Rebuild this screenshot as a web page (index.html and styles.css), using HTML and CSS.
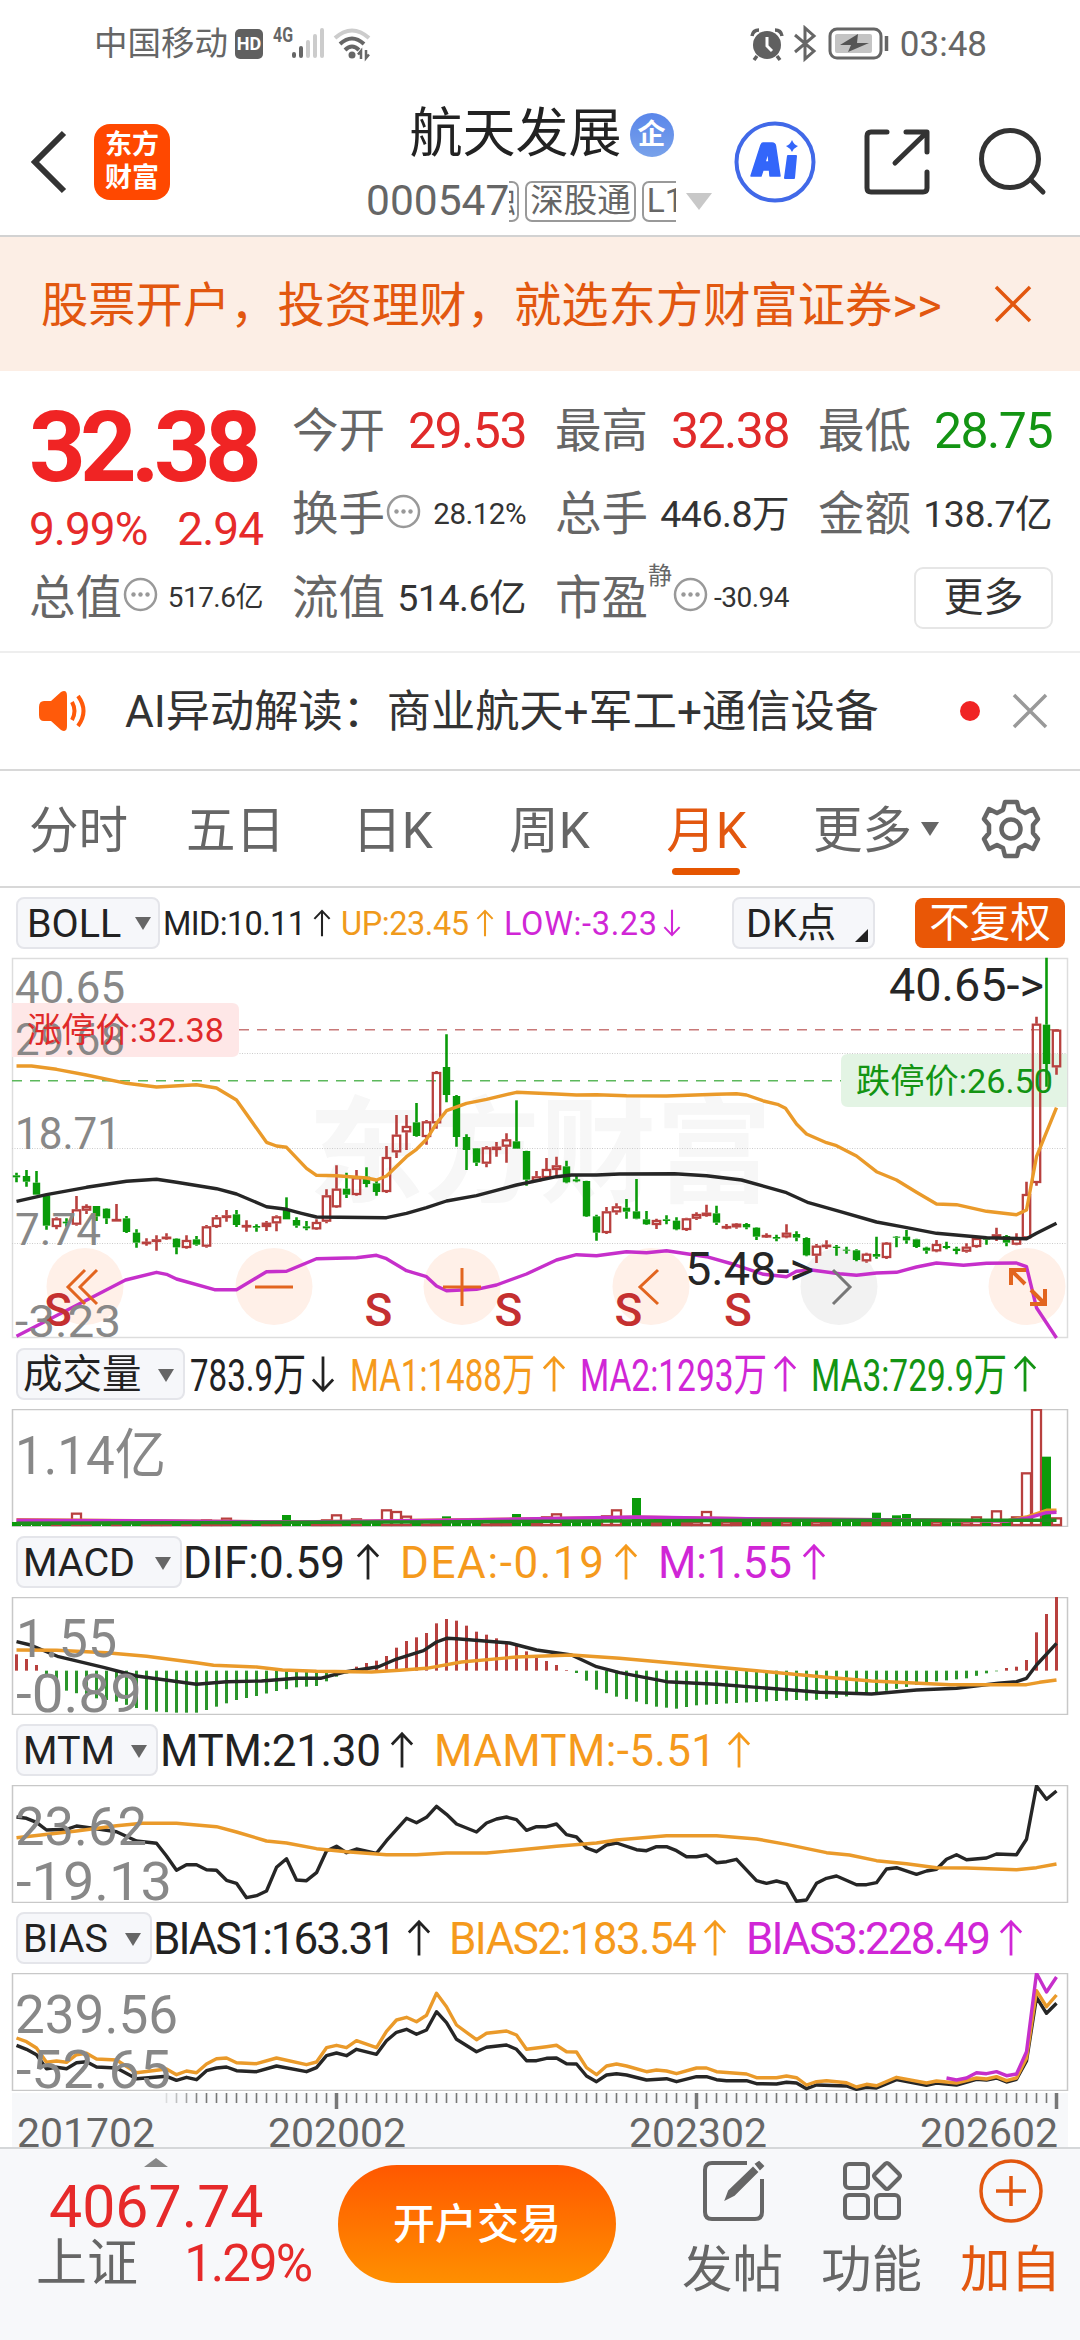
FILE: index.html
```html
<!DOCTYPE html>
<html lang="zh-CN">
<head>
  <meta charset="UTF-8">
  <meta name="viewport" content="width=device-width, initial-scale=1.0">
  <title>航天发展 000547</title>
  <link rel="stylesheet" href="styles.css">
</head>
<body>

  <!-- Shared symbols -->
  <svg class="defs" width="0" height="0">
    <symbol id="up" viewBox="0 0 26 40"><path d="M13 39V3M2 14L13 2.5L24 14" fill="none" stroke="currentColor" stroke-width="3"/></symbol>
    <symbol id="down" viewBox="0 0 26 40"><path d="M13 1V37M2 26L13 37.5L24 26" fill="none" stroke="currentColor" stroke-width="3"/></symbol>
    <symbol id="dots" viewBox="0 0 35 35"><circle cx="17.500" cy="17.500" r="15.500" fill="none" stroke="#999" stroke-width="2.500"/><circle cx="10.500" cy="17.500" r="2.200" fill="#999"/><circle cx="17.500" cy="17.500" r="2.200" fill="#999"/><circle cx="24.500" cy="17.500" r="2.200" fill="#999"/></symbol>
  </svg>

  <div class="status">
    <span class="carrier">中国移动</span>
    <span class="hd">HD</span>
    <svg class="signal" width="102" height="44" viewBox="272 21 102 44">
      <text x="273" y="41" font-size="20" font-weight="700" textLength="20" lengthAdjust="spacingAndGlyphs" fill="#666">4G</text>
      <g stroke-width="4" stroke-linecap="round">
        <path d="M294 53V55M301 47V55" stroke="#666"/>
        <path d="M308 41V55M315 35V55M322 29V55" stroke="#ccc"/>
      </g>
      <g fill="none" stroke-width="4">
        <path d="M335 37Q352 22 369 37" stroke="#ccc"/>
        <path d="M340 43Q352 32 364 43M345 49Q352 42 359 49" stroke="#666"/>
      </g>
      <circle cx="352" cy="54" r="3.500" fill="#666"/>
      <path d="M361 58V50L358 53.500M366 49V57L369 53.500" stroke="#666" stroke-width="2.500" fill="none"/>
    </svg>
    <svg class="battery" width="142" height="38" viewBox="746 24 142 38">
      <circle cx="765" cy="44" r="14" fill="#606060"/>
      <path d="M750 35Q751 29 757 29M780 35Q779 29 773 29M755 55L752 59M775 55L778 59" stroke="#606060" stroke-width="3.500" fill="none"/>
      <path d="M765 36V45L770 50" stroke="#fff" stroke-width="3" fill="none"/>
      <path d="M793 34L812 50L803 58V27L812 35L793 51" stroke="#666" stroke-width="3" fill="none"/>
      <rect x="828" y="28" width="51" height="29" rx="7" fill="none" stroke="#666" stroke-width="3"/>
      <rect x="833" y="33" width="37" height="19" rx="2" fill="#c4c4c4"/>
      <path d="M856 33L838 44H849L846 51L867 42H855Z" fill="#555"/>
      <path d="M884.500 35V50" stroke="#666" stroke-width="3.500"/>
    </svg>
    <span class="clock">03:48</span>
  </div>

  <header class="header">
    <div class="header-left">
      <svg width="38" height="66" viewBox="0 0 38 66"><path d="M34 4L5 33L34 62" fill="none" stroke="#333" stroke-width="6"/></svg>
      <div class="logo">东方<br>财富</div>
    </div>
    <div class="title">
      <div class="name">航天发展<span class="corp">企</span></div>
      <div class="code">000547<span class="tags"><i class="tag cut">融</i><i class="tag">深股通</i><i class="tag last">L1</i></span><i class="drop"></i></div>
    </div>
    <div class="header-right">
      <svg width="82" height="82" viewBox="734 120 82 82">
        <circle cx="775" cy="161" r="38.500" fill="none" stroke="#4169e8" stroke-width="4"/>
        <path d="M763 142H772Q775 142 775.500 145L780 175H770L769.500 169H763L761 175H751L761 144Q762 142 763 142ZM768 151L765 161H769Z" fill="#3366fa" fill-rule="evenodd" stroke="#3366fa" stroke-width="1.500" stroke-linejoin="round"/>
        <path d="M788 155H796L794 177H785Z" fill="#3366fa" stroke="#3366fa" stroke-width="2" stroke-linejoin="round"/>
        <path d="M792 139Q794 144 798 145Q794 147 792 151Q790 147 786 145Q790 144 792 139Z" fill="#3366fa"/>
      </svg>
      <svg width="70" height="70" viewBox="861 126 70 70" fill="none" stroke="#333" stroke-width="5" stroke-linecap="round" stroke-linejoin="round">
        <path d="M886 131H870Q866 131 866 135V187Q866 191 870 191H922Q926 191 926 187V171M905 131H926V151M925 132L894 162"/>
      </svg>
      <svg width="70" height="70" viewBox="979 126 70 70" fill="none" stroke="#333" stroke-width="5" stroke-linecap="round">
        <circle cx="1011" cy="158" r="28.500"/><path d="M1032 179L1044 191"/>
      </svg>
    </div>
  </header>

  <div class="banner">
    <span>股票开户，投资理财，就选东方财富证券&gt;&gt;</span>
    <svg width="38" height="38" viewBox="0 0 38 38"><path d="M2 2L36 36M36 2L2 36" stroke="#e2570f" stroke-width="3.500"/></svg>
  </div>

  <section class="quote">
    <div class="last-price">
      <b>32.38</b>
      <p><span>9.99%</span><span>2.94</span></p>
    </div>
    <div class="cell"><label>今开</label><span class="red">29.53</span></div>
    <div class="cell"><label>最高</label><span class="red">32.38</span></div>
    <div class="cell"><label>最低</label><span class="green">28.75</span></div>

    <div class="cell"><label>换手</label><svg class="info"><use href="#dots"/></svg><span class="small">28.12%</span></div>
    <div class="cell"><label>总手</label><span class="mid">446.8万</span></div>
    <div class="cell"><label>金额</label><span class="mid">138.7亿</span></div>

    <div class="cell"><label>总值</label><svg class="info"><use href="#dots"/></svg><span class="tiny">517.6亿</span></div>
    <div class="cell"><label>流值</label><span class="mid">514.6亿</span></div>
    <div class="cell"><label>市盈</label><sup>静</sup><svg class="info"><use href="#dots"/></svg><span class="tiny">-30.94</span></div>
    <div class="cell end"><button class="more">更多</button></div>
  </section>

  <div class="notice">
    <svg width="50" height="44" viewBox="38 689 50 44">
      <path d="M39 707Q39 701 44 701H51L61 692Q67 689 67 696V726Q67 733 61 730L51 721H44Q39 721 39 715Z" fill="#ff5a0a"/>
      <path d="M72 702Q77 711 72 720M78 696Q89 711 78 726" fill="none" stroke="#ff5a0a" stroke-width="4"/>
    </svg>
    <span class="notice-text">AI异动解读：商业航天+军工+通信设备</span>
    <i class="dot"></i>
    <svg width="36" height="36" viewBox="0 0 36 36"><path d="M2 2L34 34M34 2L2 34" stroke="#999" stroke-width="3.500"/></svg>
  </div>

  <nav class="tabs">
    <a>分时</a><a>五日</a><a>日K</a><a>周K</a><a class="active">月K</a><a class="menu">更多<i></i></a>
    <svg width="60" height="62" viewBox="-30 -31 60 62" fill="none" stroke="#666" stroke-width="4.500" stroke-linejoin="round">
      <path d="M-6-27H6L8-19L14-16L22-20L27-10L22-4V4L27 10L22 20L14 16L8 19L6 27H-6L-8 19L-14 16L-22 20L-27 10L-22 4V-4L-27-10L-22-20L-14-16L-8-19Z"/>
      <circle r="9.500"/>
    </svg>
  </nav>

  <div class="indicator boll">
    <button class="pick">BOLL<i></i></button>
    <svg width="534" height="69" viewBox="160 888 534 69" font-size="32.500">
      <g color="#222" fill="#222"><text x="163" y="935" textLength="143">MID:10.11</text><use href="#up" x="313" y="909" width="18" height="28"/></g>
      <g color="#f09a1c" fill="#f09a1c"><text x="341" y="935" textLength="128">UP:23.45</text><use href="#up" x="476" y="909" width="18" height="28"/></g>
      <g color="#d026d6" fill="#d026d6"><text x="504" y="935" textLength="153">LOW:-3.23</text><use href="#down" x="663" y="909" width="18" height="28"/></g>
    </svg>
    <button class="dk">DK点<i></i></button>
    <button class="fq">不复权</button>
  </div>
  <svg class="chart" id="kline" width="1080" height="382" viewBox="0 957 1080 382"></svg>

  <div class="indicator">
    <button class="pick" style="width: 169px">成交量<i></i></button>
    <svg width="895" height="70" viewBox="185 1339 895 70" font-size="45">
      <g color="#222" fill="#222"><text x="190" y="1391" textLength="116" lengthAdjust="spacingAndGlyphs">783.9万</text><use href="#down" x="311" y="1355" width="24" height="38"/></g>
      <g color="#f59a1c" fill="#f59a1c"><text x="350" y="1391" textLength="185" lengthAdjust="spacingAndGlyphs">MA1:1488万</text><use href="#up" x="542" y="1355" width="24" height="38"/></g>
      <g color="#d026d6" fill="#d026d6"><text x="580" y="1391" textLength="187" lengthAdjust="spacingAndGlyphs">MA2:1293万</text><use href="#up" x="773" y="1355" width="24" height="38"/></g>
      <g color="#139413" fill="#139413"><text x="811" y="1391" textLength="196" lengthAdjust="spacingAndGlyphs">MA3:729.9万</text><use href="#up" x="1013" y="1355" width="24" height="38"/></g>
    </svg>
  </div>
  <svg class="chart" id="volume" width="1080" height="118" viewBox="0 1409 1080 118"></svg>

  <div class="indicator">
    <button class="pick" style="width: 166px">MACD<i></i></button>
    <svg width="898" height="70" viewBox="182 1527 898 70" font-size="44">
      <g color="#222" fill="#222"><text x="183" y="1578" textLength="162">DIF:0.59</text><use href="#up" x="356" y="1543" width="24" height="38"/></g>
      <g color="#f59a1c" fill="#f59a1c"><text x="400" y="1578" textLength="204">DEA:-0.19</text><use href="#up" x="614" y="1543" width="24" height="38"/></g>
      <g color="#d026d6" fill="#d026d6"><text x="658" y="1578" textLength="134">M:1.55</text><use href="#up" x="802" y="1543" width="24" height="38"/></g>
    </svg>
  </div>
  <svg class="chart" id="macd" width="1080" height="118" viewBox="0 1597 1080 118"></svg>

  <div class="indicator">
    <button class="pick" style="width: 142px">MTM<i></i></button>
    <svg width="922" height="70" viewBox="158 1715 922 70" font-size="44">
      <g color="#222" fill="#222"><text x="160" y="1766" textLength="221">MTM:21.30</text><use href="#up" x="390" y="1731" width="24" height="38"/></g>
      <g color="#f59a1c" fill="#f59a1c"><text x="434" y="1766" textLength="282">MAMTM:-5.51</text><use href="#up" x="727" y="1731" width="24" height="38"/></g>
    </svg>
  </div>
  <svg class="chart" id="mtm" width="1080" height="118" viewBox="0 1785 1080 118"></svg>

  <div class="indicator">
    <button class="pick" style="width: 136px">BIAS<i></i></button>
    <svg width="928" height="70" viewBox="152 1903 928 70" font-size="44">
      <g color="#222" fill="#222"><text x="153" y="1954" textLength="243">BIAS1:163.31</text><use href="#up" x="407" y="1919" width="24" height="38"/></g>
      <g color="#f59a1c" fill="#f59a1c"><text x="449" y="1954" textLength="248">BIAS2:183.54</text><use href="#up" x="703" y="1919" width="24" height="38"/></g>
      <g color="#d026d6" fill="#d026d6"><text x="746" y="1954" textLength="245">BIAS3:228.49</text><use href="#up" x="999" y="1919" width="24" height="38"/></g>
    </svg>
  </div>
  <svg class="chart" id="bias" width="1080" height="118" viewBox="0 1973 1080 118"></svg>
  <svg class="chart" id="axis" width="1080" height="56" viewBox="0 2091 1080 56"></svg>

  <footer class="bottom">
    <div class="index">
      <i></i>
      <b>4067.74</b>
      <p>上证<span>1.29%</span></p>
    </div>
    <button class="trade">开户交易</button>
    <div class="action">
      <svg width="64" height="64" viewBox="700 2159 64 64" fill="none" stroke="#666" stroke-width="4">
        <path d="M746 2163H711Q704 2163 704 2170V2212Q704 2219 711 2219H754Q761 2219 761 2212V2179"/>
        <path d="M725 2199L728 2191L752 2168L756 2172L733 2195ZM755 2164L758 2162L762 2166L759 2169Z" fill="#666" stroke-width="2"/>
      </svg>
      <span>发帖</span>
    </div>
    <div class="action">
      <svg width="64" height="64" viewBox="840 2159 64 64" fill="none" stroke="#666" stroke-width="4">
        <rect x="845" y="2164" width="23" height="24" rx="4"/><rect x="845" y="2195" width="23" height="23" rx="4"/><rect x="876" y="2195" width="23" height="23" rx="4"/>
        <path d="M885 2164Q887 2162 889 2164L899 2174Q901 2176 899 2178L889 2188Q887 2190 885 2188L875 2178Q873 2176 875 2174Z"/>
      </svg>
      <span>功能</span>
    </div>
    <div class="action orange">
      <svg width="64" height="64" viewBox="0 0 64 64" fill="none" stroke="#e2570f" stroke-width="3.500"><circle cx="32" cy="32" r="30"/><path d="M17 32H47M32 17V47"/></svg>
      <span>加自</span>
    </div>
  </footer>

  <script src="chart.js"></script>
</body>
</html>
```
FILE: styles.css
```css
* {
  margin: 0;
  padding: 0;
  box-sizing: border-box;
}

body {
  width: 1080px;
  height: 2340px;
  overflow: hidden;
  background: #fff;
  color: #333;
  font-family: Roboto, "Noto Sans CJK SC", sans-serif;
  line-height: 1;
}

i {
  font-style: normal;
}

svg {
  display: block;
  flex: none;
}

button {
  border: none;
  font-family: inherit;
  line-height: 1;
  white-space: nowrap;
}

.defs {
  position: absolute;
}

/* Status bar */
.status {
  display: flex;
  align-items: center;
  height: 88px;
  padding: 0 93px 0 94px;
  color: #666;
  font-size: 33.5px;
}

.hd {
  width: 28px;
  height: 30px;
  margin: 0 9px 0 7px;
  border-radius: 5px;
  background: #606060;
  color: #fff;
  font-size: 18px;
  font-weight: 700;
  line-height: 30px;
  text-align: center;
}

.battery {
  margin-left: auto;
}

.clock {
  margin-left: 10px;
  font-size: 35px;
}

/* Header */
.header {
  display: flex;
  height: 149px;
  border-bottom: 2px solid #d2d2d2;
}

.header-left {
  display: flex;
  align-items: center;
  gap: 26px;
  width: 366px;
  padding-left: 30px;
}

.logo {
  width: 76px;
  height: 76px;
  padding-top: 5px;
  border-radius: 16px;
  background: #ff4800;
  color: #fff;
  font-size: 27px;
  font-weight: 700;
  line-height: 33px;
  text-align: center;
}

.title {
  width: 348px;
  padding-top: 11px;
}

.name {
  display: flex;
  align-items: center;
  justify-content: center;
  gap: 8px;
  height: 68px;
  padding: 3px 0 0 3px;
  color: #222;
  font-size: 53px;
}

.corp {
  width: 44px;
  height: 44px;
  border-radius: 50%;
  background: linear-gradient(#5a86ea, #79a2ea);
  color: #fff;
  font-size: 28px;
  font-weight: 700;
  line-height: 44px;
  text-align: center;
}

.code {
  display: flex;
  align-items: center;
  height: 68px;
  color: #666;
  font-size: 42.5px;
}

.tags {
  display: flex;
  gap: 6px;
  width: 167px;
  overflow: hidden;
}

.tag {
  flex: none;
  height: 41px;
  padding: 0 3px;
  border: 2px solid #999;
  border-radius: 7px;
  font-size: 33.5px;
  line-height: 36px;
}

.tag.cut {
  width: 10px;
  padding: 0;
  border-left: none;
  border-radius: 0 7px 7px 0;
  overflow: hidden;
  text-indent: -27px;
}

.tag.last {
  padding-right: 10px;
}

.drop {
  margin-left: 10px;
  border: 13px solid transparent;
  border-top: 17px solid #c8c8c8;
  border-bottom: none;
}

.header-right {
  display: flex;
  align-items: center;
  gap: 46px;
  padding-left: 20px;
}

/* Promotion */
.banner {
  display: flex;
  align-items: center;
  justify-content: space-between;
  height: 134px;
  padding: 0 48px 0 41px;
  background: #fceee5;
  color: #e2570f;
  font-size: 47.3px;
}

.banner span {
  padding-top: 5px;
}

/* Quote grid */
.quote {
  display: grid;
  grid-template-columns: repeat(4, 234px);
  grid-template-rows: repeat(3, 83.5px);
  column-gap: 29px;
  height: 282px;
  padding: 18px 0 0 29px;
  border-bottom: 2px solid #eee;
}

.last-price {
  grid-row: span 2;
  padding-top: 9px;
  color: #f02424;
}

.last-price b {
  display: block;
  font-size: 99px;
  letter-spacing: -5.8px;
}

.last-price p {
  display: flex;
  justify-content: space-between;
  margin-top: 9px;
  font-size: 46px;
  color: #e62a2a;
  letter-spacing: -1px;
}

.cell {
  display: flex;
  align-items: center;
  justify-content: space-between;
}

.cell label {
  color: #666;
  font-size: 46.5px;
}

.cell span {
  letter-spacing: -0.5px;
}

.cell .red,
.cell .green {
  color: #e02a2a;
  font-size: 50px;
  letter-spacing: -1.5px;
}

.cell .green {
  color: #139413;
}

.cell .mid {
  padding-top: 1px;
  font-size: 37.5px;
}

.cell .small {
  margin-left: auto;
  font-size: 29.5px;
}

.cell .tiny {
  margin-left: auto;
  font-size: 28px;
}

.cell sup {
  margin-top: -44px;
  color: #666;
  font-size: 24px;
}

.info {
  width: 35px;
  height: 35px;
  margin: 0 0 6px 1px;
}

.cell.end {
  justify-content: flex-end;
}

.more {
  width: 139px;
  height: 62px;
  margin-right: -1px;
  border: 2px solid #e6e6e6;
  border-radius: 9px;
  background: #fff;
  color: #333;
  font-size: 40px;
}

/* Notice */
.notice {
  display: flex;
  align-items: center;
  height: 118px;
  padding: 0 32px 0 38px;
  border-bottom: 2px solid #d8d8d8;
}

.notice-text {
  margin-left: 37px;
  padding-top: 3px;
  font-size: 44.2px;
}

.dot {
  width: 20px;
  height: 20px;
  margin: 0 32px 0 auto;
  border-radius: 50%;
  background: #f02424;
}

/* Period tabs */
.tabs {
  display: flex;
  align-items: center;
  height: 117px;
  padding-right: 39px;
  border-bottom: 2px solid #d8d8d8;
  color: #666;
  font-size: 49.5px;
}

.tabs a {
  position: relative;
  width: 157px;
  padding-top: 6px;
  text-align: center;
}

.tabs .menu {
  padding-left: 28px;
  text-align: left;
  white-space: nowrap;
}

.tabs svg {
  margin-left: auto;
}

.tabs .active {
  color: #e2570f;
}

.tabs .active::after {
  content: "";
  position: absolute;
  left: 44px;
  bottom: -19px;
  width: 68px;
  height: 7px;
  border-radius: 4px;
  background: #e55500;
}

.tabs i {
  display: inline-block;
  margin: 0 0 12px 9px;
  border: 9px solid transparent;
  border-top: 14px solid #666;
  border-bottom: none;
}

/* Indicator headers */
.indicator {
  display: flex;
  align-items: center;
  height: 70px;
  padding-left: 16px;
}

.boll {
  height: 69px;
}

.pick,
.dk {
  display: flex;
  flex: none;
  align-items: center;
  justify-content: space-between;
  height: 52px;
  padding: 2px 9px 0 5px;
  border: 2px solid #e4e5ea;
  border-radius: 8px;
  background: #f6f7fa;
  color: #222;
  font-size: 39.5px;
}

.boll .pick {
  width: 144px;
  padding-left: 9px;
}

.boll .pick i {
  margin-right: -2px;
}

.pick i {
  border: 8px solid transparent;
  border-top: 13px solid #666;
  border-bottom: none;
}

.dk {
  width: 143px;
  margin-left: 38px;
  padding: 2px 5px 0 12px;
}

.dk i {
  align-self: flex-end;
  margin-bottom: 5px;
  border-left: 13px solid transparent;
  border-bottom: 13px solid #222;
}

.fq {
  width: 150px;
  height: 50px;
  margin-left: 40px;
  padding-top: 1px;
  border-radius: 8px;
  background: #e95706;
  color: #fff;
  font-size: 40.5px;
}

/* Bottom bar */
.bottom {
  display: flex;
  height: 193px;
  border-top: 2px solid #d5d7d9;
  background: #f7f8fa;
}

.index {
  width: 338px;
  flex: none;
  padding: 9px 0 0 36px;
  color: #e62a2a;
}

.index i {
  display: block;
  width: 24px;
  margin-left: 108px;
  border: 12px solid transparent;
  border-bottom: 9px solid #888;
  border-top: none;
}

.index b {
  display: block;
  margin: 10px 0 0 13px;
  font-size: 59px;
  font-weight: 400;
}

.index p {
  display: flex;
  align-items: center;
  justify-content: space-between;
  width: 275px;
  margin-top: 2px;
  color: #666;
  font-size: 51px;
}

.index p span {
  color: #e62a2a;
  letter-spacing: -2px;
}

.trade {
  flex: none;
  width: 278px;
  height: 118px;
  margin: 16px 47px 0 0;
  padding-top: 2px;
  border-radius: 59px;
  background: linear-gradient(#ff5800, #ff8f00);
  color: #fff;
  font-size: 42px;
  font-weight: 500;
}

.action {
  display: flex;
  flex: none;
  flex-direction: column;
  align-items: center;
  gap: 22px;
  width: 139px;
  padding-top: 10px;
  color: #666;
  font-size: 50.5px;
}

.action.orange {
  color: #e2570f;
}
```
FILE: chart.js
```js
const BLACK = '#262626', ORANGE = '#ea9a2a', PURPLE = '#c62fcb', RED = '#b8403e', GREEN = '#0a9b0a';
const COUNT = 105;

// [high, body top, body bottom, low, up]
const candles = [
  [698,706,712,727,0],[690,708,725,740,0],[693,728,764,764,0],[765,766,857,869,0],[832,835,861,868,1],
  [835,845,850,860,0],[768,808,854,857,1],[793,798,812,822,1],[798,798,829,843,0],[805,806,835,852,0],
  [792,837,841,843,1],[828,835,876,879,0],[868,878,908,923,0],[895,905,911,917,1],[886,898,906,932,1],
  [880,890,897,899,1],[895,896,922,943,0],[886,900,924,926,1],[888,898,914,917,0],[855,859,920,923,1],
  [825,832,861,864,1],[810,826,834,845,1],[810,823,855,861,0],[841,855,861,875,1],[853,858,863,875,0],
  [843,848,861,873,1],[826,829,850,874,1],[772,808,838,838,0],[832,840,857,863,0],[843,859,865,871,0],
  [838,846,868,870,1],[748,766,845,850,1],[676,746,802,804,1],[698,746,764,774,0],[690,712,765,767,1],
  [682,710,732,742,0],[722,730,756,767,0],[618,651,756,759,1],[525,584,637,654,1],[525,558,577,630,1],
  [489,547,588,590,0],[540,544,591,614,1],[393,396,550,566,1],[283,381,465,487,0],[465,468,591,620,0],
  [583,591,630,690,0],[624,625,668,678,0],[618,622,671,682,1],[606,620,630,650,1],[580,598,620,668,1],
  [481,604,626,626,0],[632,633,719,737,0],[693,709,724,726,1],[654,687,714,716,1],[650,676,690,709,1],
  [662,679,727,730,0],[708,718,724,727,0],[722,723,829,831,0],[824,829,878,902,0],[801,814,879,882,1],
  [790,799,817,824,1],[777,803,815,836,0],[717,814,836,838,0],[813,838,853,855,0],[836,840,855,867,1],
  [826,838,843,853,0],[832,842,868,871,0],[833,835,870,873,1],[817,822,836,840,1],[794,818,828,830,1],
  [797,820,848,855,0],[852,858,863,868,1],[849,851,862,866,1],[849,852,862,868,0],[862,863,890,900,0],
  [880,885,890,893,1],[884,891,896,904,0],[853,878,892,895,1],[874,882,893,904,0],[892,894,946,949,0],
  [912,917,947,969,1],[901,914,921,927,1],[915,920,924,947,0],[920,929,932,941,0],[928,931,960,964,0],
  [938,941,964,968,1],[890,942,950,956,0],[906,908,954,957,1],[888,890,893,922,0],[870,890,901,911,0],
  [896,898,921,924,0],[920,923,932,941,0],[900,912,934,937,1],[905,918,924,928,0],[920,926,933,943,0],
  [910,920,935,938,1],[892,894,921,923,1],[890,895,899,914,0],[863,883,892,903,1],[885,888,908,919,0],
  [880,895,914,916,1],[725,762,895,897,1],[230,251,729,737,1],[53,254,372,440,0],[268,269,382,404,1]
];

// Curves are flat lists of month index, value
const bollUp = [0,378,1.5,378,4,388,7,405,11,430,14,441,18,434,20,444,22,480,25,607,26,618,27,622,29,685,30,706,32,707,35,714,36,720,37,708,39,650,40,628,41,598,42,550,43,512,45,490,47,478,50,457,54,462,56,465,58,464,61,467,65,468,70,463,72,461,73,465,74.7,483,76.1,493,76.9,505,78,552,79,582,81,608,82,617,84,648,86,695,88,720,90,757,92,792,94,794,97,814,100,824,101,810,102,650,104,503];
const bollMid = [0,784,3,764,7,742,11,724,14,718,16,727,20,746,22,762,25,800,27,808,28.5,820,30,831,37,833,39,820,41,803,43,783,46,767,50,735,54,710,55.5,705,58,705,60.3,702,65.8,701,69,707,72.5,720,77,758,79.2,788,82.3,814,86,846,88.5,860,92,880,97,893,101,896,102,880,104,850];
const bollLow = [0,1189,8,1065,10.9,1020,14,997,15,1003,16,1017,19.8,1049,22,1049,25,995,27,994,30,956,34,953,36,946,37,956,39,992,41,1010,42,1038,43,1052,46,1048,48,1035,51,1002,54,960,56,944,58,947,61,935,63,938,65,932,69,950,71.6,972,74.7,1003,77,1010,78,994,79.5,990,82.3,1001,84,1006,86,999,88,997,90,981,92,969,94.7,976,97,970,100,969,101,980,102,1103,104,1194];

const volumes = {6:518,19:538,21:533,27:525,31:538,32:523,34:535,37:508,38:513,39:527,43:529,50:522,53:529,54:520,59:526,60:508,62:474,69:513,86:518,88:526,89:522,96:529,98:511,100:529,101:397,102:206,103:350,104:532};
const volMa1 = [0,539,15,543,28,546,45,539,62,532,75,537,90,540,99,543,101,531,103,511,104,511];
const volMa2 = [0,541,15,543,28,546,45,540,62,531,75,537,90,540,99,543,101,535,103,518,104,517];
const volMa3 = [0,550,30,547,45,545,75,541,104,541];

const macdBars = [0,943,1,957,2,975,3,1003,4,1028,5,1052,8,1075,10,1085,12,1104,14,1115,16,1118,18,1118,19,1110,22,1080,24,1068,26,1053,28,1042,30,1038,32,1010,33,1000,34,980,35,969,36,962,37,948,38,923,39,903,40,892,41,879,42,850,43,837,44,842,45,857,46,875,47,884,48,895,49,905,50,913,51,934,52,950,53,963,54,975,55,990,56,999,57,1022,58,1049,60,1070,62,1085,64,1100,66,1106,68,1096,70,1092,74,1086,78,1080,79,1082,82,1074,85,1060,86,1058,90,1035,92,1024,95,1015,97,1000,98,994,99,984,100,980,101,960,102,877,103,822,104,771];
const dif = [0,905,1.4,915,4.2,950,8.7,982,12,1008,18,1033,21,1025,24.5,1023,28,1015,30.4,1015,32.8,996,36.2,980,38,957,40.7,932,42,906,43,895,44,896,49.3,909,52,930,55.5,945,58,980,60.3,998,65,1025,70,1033,76.2,1047,80.3,1057,85.5,1062,90,1050,94,1045,98.2,1030,100,1025,101,1015,102,975,104,910];
const dea = [0,930,4,931,9,938,13,949,18,968,19.7,976,24,981,26.6,990,30,994,35.5,996,38.3,991,41,985,44.5,966,50,951,55.5,945,60.3,955,67,973,74,992,81,1012,85.5,1023,93.4,1034,101,1034,102.3,1027,104,1020];

const mtm = [0,351,1,355,2,367,3,390,5,388,6,378,8,386,10,395,12,423,14,430,15,468,16,511,17,494,18,494,19,509,20,511,21,541,22,550,23,593,24,587,25,573,26,502,27,476,28,540,29,542,30,518,31,453,32,439,33,458,34,447,36,460,37,422,39,355,40,368,41,352,42,319,43,343,44,372,46,396,47,369,48,357,49,351,50,359,51,391,52,380,53,380,54,372,55,404,56,411,57,444,58,455,59,435,60,429,62,449,63,452,64,440,65,440,66,452,67,470,68,470,69,465,70,488,71,485,72,478,74,542,75,550,76,543,77,551,78,604,79,600,80,550,81,535,82,528,84,554,85,554,86,548,87,507,88,503,90,523,91,513,92,508,93,478,94,464,95,479,97,474,98,462,100,464,101,418,102,258,103,298,104,273];
const mamtm = [0,413,6,393,10,377,12.6,370,16,370,20,380,22,396,25,423,27,429,30,446,33,455,37,464,40,464,43,459,47,459,50,451,54,439,58,429,60,420,65,407,70,407,74,417,77,433,81,458,83.3,465,86,482,89,491,92,503,95,504,100,509,102,503,104,492];

const bias1 = [0,1036,1,1048,2,1064,3,1106,4,1102,5,1106,6,1088,7,1085,8,1101,10,1104,12,1136,15,1129,16,1141,17,1132,18,1139,19,1112,20,1104,21,1101,22,1112,24,1115,26,1098,29,1115,30,1103,31,1067,32,1059,33,1067,34,1048,36,1063,37,1022,38,997,39,988,40,1003,41,990,42,935,43,968,44,1018,46,1055,47,1042,49,1035,50,1048,51,1082,52,1082,53,1075,54,1074,55,1091,56,1092,57,1128,58,1145,59,1125,60,1121,61,1125,63,1140,65,1136,66,1145,68,1130,69,1130,70,1139,71,1142,73,1142,74,1151,76,1152,77,1147,78,1149,79,1166,80,1155,83,1158,84,1168,85,1162,86,1164,88,1139,91,1156,92,1149,94,1155,96,1138,97,1140,98,1134,99,1146,100,1138,101,1083,102,892,103,940,104,910];
const bias2 = [0,1014,1,1025,2,1044,3,1087,4,1083,5,1087,6,1064,7,1060,8,1077,10,1080,12,1118,15,1107,16,1124,17,1113,18,1118,19,1092,20,1076,21,1074,22,1088,24,1091,26,1074,29,1094,30,1086,31,1043,32,1036,33,1043,34,1022,36,1043,37,994,38,960,39,952,40,965,41,946,42,880,43,920,44,975,46,1019,47,1000,49,993,50,1005,51,1048,53,1040,54,1036,55,1055,56,1056,57,1103,58,1124,59,1098,60,1092,61,1098,63,1115,64,1110,65,1113,66,1121,68,1104,69,1104,70,1115,73,1122,74,1133,76,1133,77,1128,78,1133,79,1155,80,1145,81,1142,83,1148,84,1161,85,1153,86,1157,88,1132,91,1149,92,1143,94,1149,96,1134,97,1137,98,1130,99,1142,100,1134,101,1075,102,872,103,920,104,885];
const bias3 = [93,1134,94,1140,95,1134,96,1118,97,1121,98,1115,99,1127,100,1122,101,1055,102,820,103,876,104,831];

const x = i => 16.5 + i * 10;
const scale = top => v => top + v / 3;

function curve(data, y, color, width = 3.4) {
  const pts = [];
  for (let i = 0; i < data.length; i += 2) pts.push(`${x(data[i]).toFixed(1)},${y(data[i + 1]).toFixed(1)}`);
  return `<polyline points="${pts.join(' ')}" fill="none" stroke="${color}" stroke-width="${width}" stroke-linejoin="round"/>`;
}

function frame(top, height, color = '#c8c8c8') {
  return `<rect x="12.500" y="${top + 0.5}" width="1055" height="${height - 1}" fill="none" stroke="${color}" stroke-width="1.500"/>`;
}

function label(text, left, baseline, width, size = 54, color = '#888', extra = '') {
  return `<text x="${left}" y="${baseline}" font-size="${size}" fill="${color}" textLength="${width}" lengthAdjust="spacingAndGlyphs" ${extra}>${text}</text>`;
}

function bar(cx, top, bottom, up, w = 7.4) {
  return up
    ? `<rect x="${cx - w / 2}" y="${top + 1}" width="${w}" height="${Math.max(bottom - top - 2, 0.5)}" fill="none" stroke="${RED}" stroke-width="2.300"/>`
    : `<rect x="${cx - w / 2}" y="${top}" width="${w}" height="${bottom - top}" fill="${GREEN}"/>`;
}

function draw(id, parts) {
  document.getElementById(id).innerHTML = parts.join('');
}

function drawKline() {
  const y = scale(940);
  const out = [label('东方财富', 308, 1193, 464, 115, '#f7f7f7', 'font-weight="700"')];
  out.push(frame(958, 380, '#ddd'));
  [1053.5, 1148.5, 1243.5].forEach(g => out.push(`<path d="M12 ${g}H1067" stroke="#ccc" stroke-dasharray="1 1.500"/>`));
  out.push(`<path d="M239 1029.700H1067" stroke="#c87878" stroke-width="1.600" stroke-dasharray="10 8"/>`);
  out.push(`<path d="M12 1080.700H842" stroke="#5cb85c" stroke-width="1.600" stroke-dasharray="10 8"/>`);
  out.push('<path d="M12 1003H232Q239 1003 239 1010V1050Q239 1057 232 1057H12Z" fill="#fee7e7"/>');
  out.push('<path d="M1067 1054H848Q841 1054 841 1061V1100Q841 1107 848 1107H1067Z" fill="#e3f4e4"/>');

  // Round control buttons
  [85, 274, 462, 651, 839, 1027].forEach((cx, n) => out.push(`<circle cx="${cx}" cy="1286.500" r="38.500" fill="${n === 4 ? '#f2f2f2' : '#fff0e8'}"/>`));

  candles.forEach(([high, top, bottom, low, up], i) => {
    const cx = x(i), color = up ? RED : GREEN;
    out.push(`<path d="M${cx} ${y(high)}V${y(top)}M${cx} ${y(bottom)}V${y(low)}" stroke="${color}" stroke-width="2.600"/>`);
    out.push(bar(cx, y(top), y(bottom), up));
  });
  out.push(curve(bollUp, y, ORANGE), curve(bollMid, y, BLACK), curve(bollLow, y, PURPLE));

  [58, 378.5, 508.5, 628.5, 738].forEach(cx => out.push(`<text x="${cx}" y="1326" font-size="46" font-weight="500" text-anchor="middle" fill="#c43030">S</text>`));
  out.push(label('40.65', 15, 1002.500, 110, 45), label('29.68', 15, 1055, 110, 45), label('18.71', 15, 1149, 106, 45), label('7.74', 15, 1245, 86, 45), label('-3.23', 15, 1336.500, 106, 45));
  out.push('<g fill="none" stroke="#e2651f" stroke-width="3"><path d="M85 1270L68 1287L85 1304M97 1270L80 1287L97 1304"/><path d="M255 1287H293M443 1287H481M462 1268V1306M658 1270L640 1287L658 1304"/><path d="M833 1270L850 1287L833 1304" stroke="#777"/><path d="M1011 1285V1270H1026M1011 1270L1025 1284M1045 1289V1304H1030M1045 1304L1031 1290" stroke-width="4"/></g>');
  out.push(label('涨停价:32.38', 27, 1041.500, 197, 34, '#e02a2a'), label('跌停价:26.50', 856, 1093, 197, 34, '#139413'));
  out.push(label('40.65-&gt;', 889, 1001, 155, 46, '#262626'), label('5.48-&gt;', 685, 1285, 129, 46, '#262626'));
  draw('kline', out);
}

function drawVolume() {
  const y = scale(1340);
  const out = [frame(1409, 118)];
  candles.forEach((c, i) => out.push(bar(x(i), y(volumes[i] || 546 - (i % 3)), 1526, c[4], 9)));
  out.push(curve(volMa1, y, ORANGE), curve(volMa2, y, PURPLE), curve(volMa3, y, '#1d8f1d'));
  out.push(label('1.14亿', 15, 1474, 151));
  draw('volume', out);
}

function drawMacd() {
  const y = scale(1340), zero = 992;
  const out = [frame(1597, 118)];
  for (let i = 0, n = 0; i < COUNT; i++) {
    while (n + 2 < macdBars.length - 2 && macdBars[n + 2] <= i) n += 2;
    const t = (i - macdBars[n]) / (macdBars[n + 2] - macdBars[n]);
    const v = macdBars[n + 1] + t * (macdBars[n + 3] - macdBars[n + 1]);
    out.push(`<path d="M${x(i)} ${y(zero)}V${y(v)}" stroke="${v < zero ? RED : '#2a962a'}" stroke-width="3"/>`);
  }
  out.push(curve(dif, y, BLACK), curve(dea, y, ORANGE));
  out.push(label('1.55', 16, 1656.500, 101), label('-0.89', 16, 1711.500, 126));
  draw('macd', out);
}

function drawMtm() {
  const y = scale(1700);
  draw('mtm', [frame(1785, 118), curve(mtm, y, BLACK), curve(mamtm, y, ORANGE), label('23.62', 15, 1844.500, 132), label('-19.13', 16, 1899.500, 156)]);
}

function drawBias() {
  const y = scale(1700);
  draw('bias', [frame(1973, 118), curve(bias1, y, BLACK), curve(bias2, y, ORANGE), curve(bias3, y, PURPLE), label('239.56', 15, 2032.500, 163), label('-52.65', 16, 2087.500, 155)]);
}

function drawAxis() {
  const out = ['<rect x="12" y="2093" width="1056" height="54" fill="#f7f8fa"/>'];
  for (let i = 15; i < COUNT; i++) {
    const major = i === 32 || i === 68 || i === 104;
    out.push(`<path d="M${x(i)} 2093V${major ? 2109 : 2103}" stroke="#777" stroke-width="${major ? 3.5 : 1.6}" opacity="${Math.min(1, (i - 14) * 0.22)}"/>`);
  }
  [['201702', 17], ['202002', 268], ['202302', 629], ['202602', 920]].forEach(([t, left]) => out.push(label(t, left, 2147, 138, 41, '#666')));
  draw('axis', out);
}

drawKline();
drawVolume();
drawMacd();
drawMtm();
drawBias();
drawAxis();
```
